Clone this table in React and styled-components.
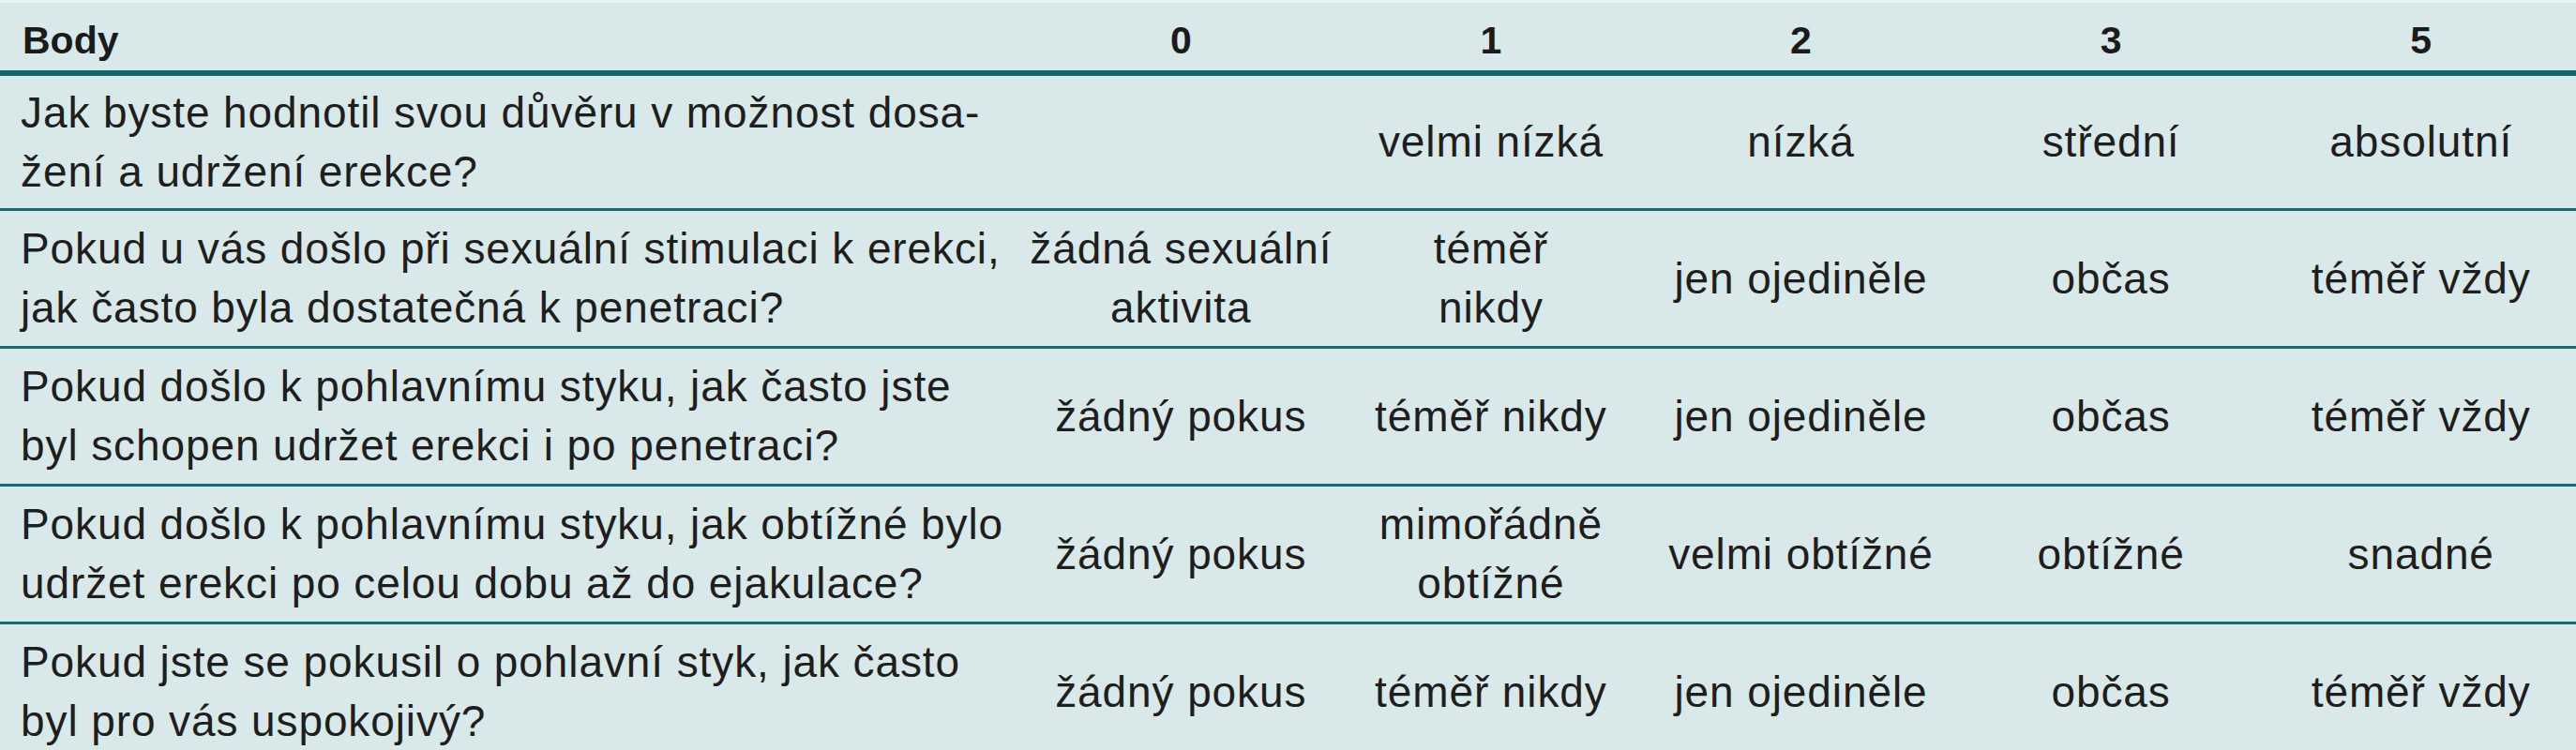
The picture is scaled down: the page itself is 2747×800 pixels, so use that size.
import React from 'react';
import styled, { createGlobalStyle } from 'styled-components';

const GlobalStyle = createGlobalStyle`
  html, body {
    margin: 0;
    padding: 0;
    background: #d9e8e9;
  }
  body {
    font-family: 'Liberation Sans', Arial, sans-serif;
    color: #1e1e1e;
  }
`;

const HEADER = ['Body', '0', '1', '2', '3', '5'];

const ROWS = [
  {
    question: ['Jak byste hodnotil svou důvěru v možnost dosa-', 'žení a udržení erekce?'],
    answers: ['', 'velmi nízká', 'nízká', 'střední', 'absolutní'],
    first: true,
  },
  {
    question: ['Pokud u vás došlo při sexuální stimulaci k erekci,', 'jak často byla dostatečná k penetraci?'],
    answers: [['žádná sexuální', 'aktivita'], ['téměř', 'nikdy'], 'jen ojediněle', 'občas', 'téměř vždy'],
  },
  {
    question: ['Pokud došlo k pohlavnímu styku, jak často jste', 'byl schopen udržet erekci i po penetraci?'],
    answers: ['žádný pokus', 'téměř nikdy', 'jen ojediněle', 'občas', 'téměř vždy'],
  },
  {
    question: ['Pokud došlo k pohlavnímu styku, jak obtížné bylo', 'udržet erekci po celou dobu až do ejakulace?'],
    answers: ['žádný pokus', ['mimořádně', 'obtížné'], 'velmi obtížné', 'obtížné', 'snadné'],
  },
  {
    question: ['Pokud jste se pokusil o pohlavní styk, jak často', 'byl pro vás uspokojivý?'],
    answers: ['žádný pokus', 'téměř nikdy', 'jen ojediněle', 'občas', 'téměř vždy'],
  },
];

const Lines = ({ value }) => {
  const lines = Array.isArray(value) ? value : [value];
  return lines.map((line, i) => (
    <React.Fragment key={i}>
      {i > 0 && <br />}
      {line}
    </React.Fragment>
  ));
};

const ScoreTable = () => (
  <Table>
    <HeaderRow>
      {HEADER.map((label, i) => (
        <HeaderCell key={label} centered={i > 0}>
          {label}
        </HeaderCell>
      ))}
    </HeaderRow>
    {ROWS.map((row, r) => (
      <Row key={r} first={row.first}>
        <QuestionCell>
          <Lines value={row.question} />
        </QuestionCell>
        {row.answers.map((answer, i) => (
          <AnswerCell key={i}>
            <Lines value={answer} />
          </AnswerCell>
        ))}
      </Row>
    ))}
  </Table>
);

export default function App() {
  return (
    <>
      <GlobalStyle />
      <ScoreTable />
    </>
  );
}

const columns = '1094px repeat(5, 1fr)';

const Table = styled.div`
  width: 2747px;
  display: flex;
  flex-direction: column;
  background: #d9e8e9;
  border-top: 3px solid #ecf3f3;
`;

const HeaderRow = styled.div`
  display: grid;
  grid-template-columns: ${columns};
  height: 72px;
  border-bottom: 6px solid #12666c;
  box-shadow: 0 1px 0 0 #c9eef0 inset;
`;

const HeaderCell = styled.div`
  display: flex;
  align-items: flex-end;
  justify-content: ${(props) => (props.centered ? 'center' : 'flex-start')};
  padding: 0 0 9px ${(props) => (props.centered ? '0' : '24px')};
  font-size: 41px;
  font-weight: 700;
  line-height: 46px;
  color: #1b1b1b;
`;

const Row = styled.div`
  display: grid;
  grid-template-columns: ${columns};
  height: ${(props) => (props.first ? '141px' : '144px')};
  border-bottom: 3px solid #1b6a72;
  font-size: 46px;
  line-height: 63px;
  letter-spacing: 0.9px;
`;

const QuestionCell = styled.div`
  display: flex;
  align-items: center;
  padding-left: 22px;
  white-space: nowrap;
`;

const AnswerCell = styled.div`
  display: flex;
  align-items: center;
  justify-content: center;
  text-align: center;
  white-space: nowrap;
`;
